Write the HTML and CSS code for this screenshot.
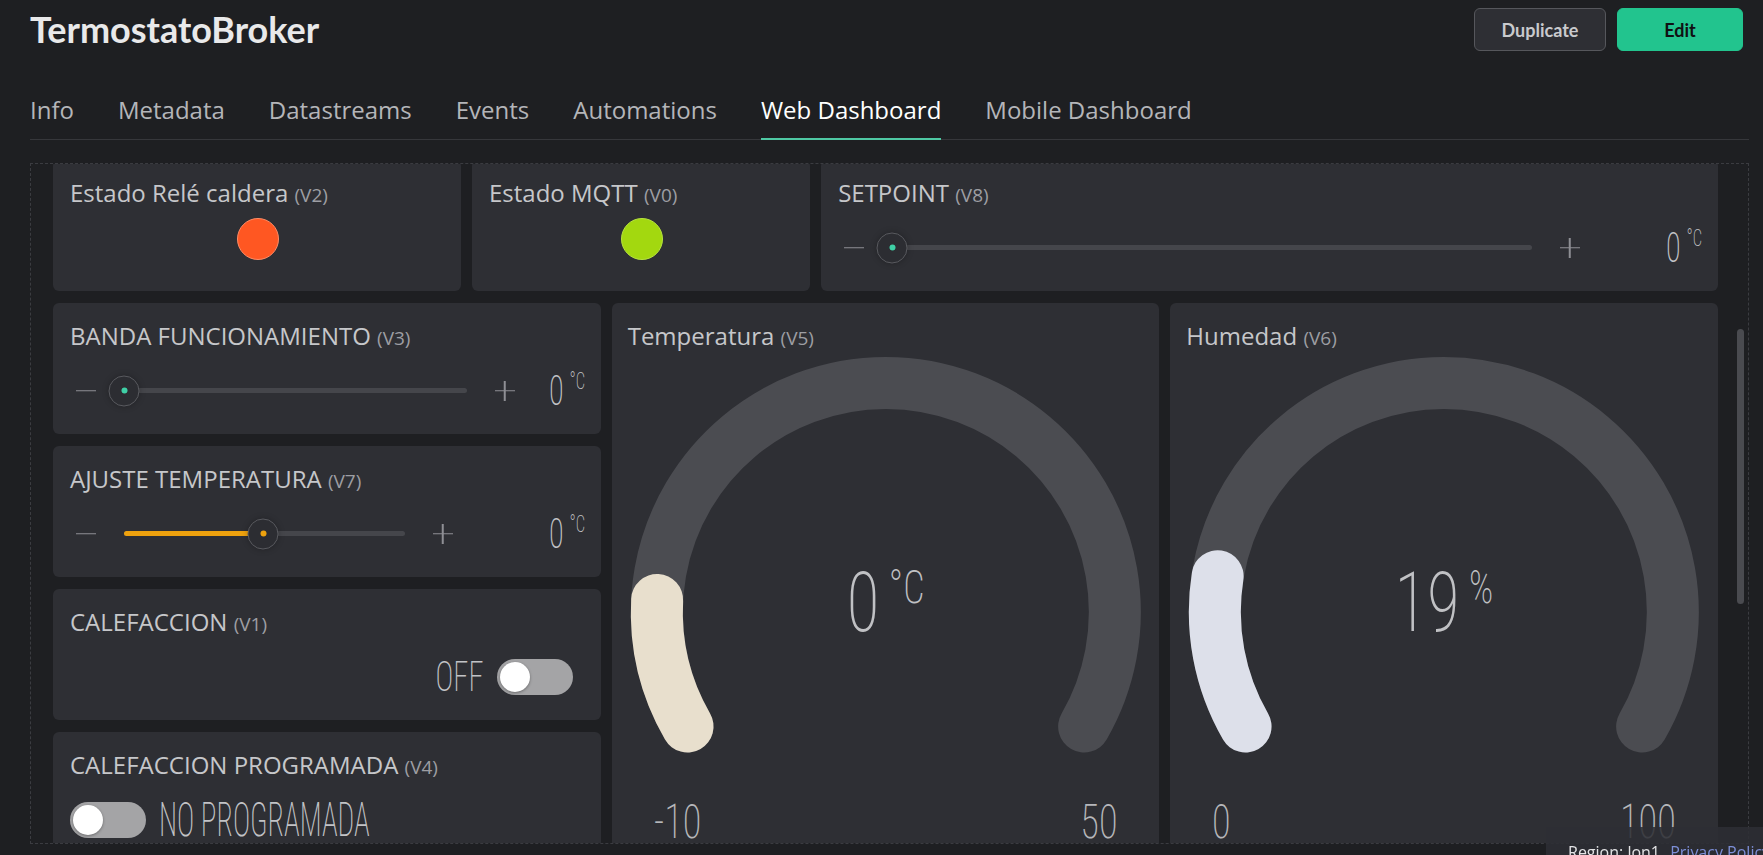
FILE: index.html
```html
<!DOCTYPE html>
<html lang="es">
<head>
<meta charset="utf-8">
<title>TermostatoBroker</title>
<link rel="stylesheet" href="styles.css">
</head>
<body>
<div class="app">
  <header class="top">
    <h1 class="title">TermostatoBroker</h1>
    <div class="actions">
      <button class="btn btn-dup">Duplicate</button>
      <button class="btn btn-edit">Edit</button>
    </div>
  </header>

  <nav class="tabs">
    <a class="tab">Info</a>
    <a class="tab">Metadata</a>
    <a class="tab">Datastreams</a>
    <a class="tab">Events</a>
    <a class="tab">Automations</a>
    <a class="tab active">Web Dashboard</a>
    <a class="tab">Mobile Dashboard</a>
  </nav>

  <section class="board">
    <div class="grid">
      <div class="card w-led1">
        <div class="wtitle">Estado Relé caldera <span class="pin">(V2)</span></div>
        <div class="led led-red"></div>
      </div>
      <div class="card w-led2">
        <div class="wtitle">Estado MQTT <span class="pin">(V0)</span></div>
        <div class="led led-green"></div>
      </div>
      <div class="card w-setpoint">
        <div class="wtitle">SETPOINT <span class="pin">(V8)</span></div>
        <div class="slider">
          <span class="step minus"></span>
          <div class="track"><span class="knob knob-teal" style="left:0%"></span></div>
          <span class="step plus"></span>
          <div class="sval sval-setpoint"><span class="cond"><span class="n">0</span><span class="u">°C</span></span></div>
        </div>
      </div>

      <div class="card w-banda">
        <div class="wtitle">BANDA FUNCIONAMIENTO <span class="pin">(V3)</span></div>
        <div class="slider">
          <span class="step minus"></span>
          <div class="track"><span class="knob knob-teal" style="left:0%"></span></div>
          <span class="step plus"></span>
          <div class="sval sval-banda"><span class="cond"><span class="n">0</span><span class="u">°C</span></span></div>
        </div>
      </div>

      <div class="card w-temp">
        <div class="wtitle">Temperatura <span class="pin">(V5)</span></div>
        <div class="gauge">
          <svg class="gsvg" viewBox="0 0 547 500" width="547" height="500">
            <path class="g-track" d="M 75.2 373.5 A 229 229 0 1 1 471.8 373.5"/>
            <path class="g-fill g-fill-temp" d="M 75.2 373.5 A 229 229 0 0 1 44.8 247"/>
          </svg>
          <div class="gval"><span class="cond"><span class="gn">0</span><span class="gu">°C</span></span></div>
          <div class="gscale">
            <span class="cond lab-l">-10</span>
            <span class="cond lab-r">50</span>
          </div>
        </div>
      </div>

      <div class="card w-hum">
        <div class="wtitle">Humedad <span class="pin">(V6)</span></div>
        <div class="gauge">
          <svg class="gsvg" viewBox="0 0 547 500" width="547" height="500">
            <path class="g-track" d="M 75.2 373.5 A 229 229 0 1 1 471.8 373.5"/>
            <path class="g-fill g-fill-hum" d="M 75.2 373.5 A 229 229 0 0 1 47.3 223.2"/>
          </svg>
          <div class="gval"><span class="cond"><span class="gn">19</span><span class="gu gu-pct">%</span></span></div>
          <div class="gscale">
            <span class="cond lab-l">0</span>
            <span class="cond lab-r">100</span>
          </div>
        </div>
      </div>

      <div class="card w-ajuste">
        <div class="wtitle">AJUSTE TEMPERATURA <span class="pin">(V7)</span></div>
        <div class="slider">
          <span class="step minus"></span>
          <div class="track"><span class="tfill" style="width:49.6%"></span><span class="knob knob-orange" style="left:49.6%"></span></div>
          <span class="step plus"></span>
          <div class="sval sval-ajuste"><span class="cond"><span class="n">0</span><span class="u">°C</span></span></div>
        </div>
      </div>

      <div class="card w-calef">
        <div class="wtitle">CALEFACCION <span class="pin">(V1)</span></div>
        <div class="swrow swrow-end">
          <span class="cond swlabel swlabel-r">OFF</span>
          <span class="switch"></span>
        </div>
      </div>

      <div class="card w-prog">
        <div class="wtitle">CALEFACCION PROGRAMADA <span class="pin">(V4)</span></div>
        <div class="swrow">
          <span class="switch"></span>
          <span class="cond swlabel swlabel-big">NO PROGRAMADA</span>
        </div>
      </div>
    </div>
    <div class="scroll-thumb"></div>
  </section>
</div>

<div class="region">Region: lon1 <a class="privacy">Privacy Policy</a></div>
</body>
</html>
```
FILE: styles.css
```css
* { box-sizing: border-box; }

html, body {
  margin: 0;
  height: 100%;
  background: #1e1f22;
  overflow: hidden;
}

body {
  font-family: "Open Sans", "Noto Sans", sans-serif;
  color: #c6c7ca;
}

.app {
  padding: 8px 14px 0 30px;
}

/* ---------- header ---------- */
.top {
  display: flex;
  justify-content: space-between;
  align-items: center;
  height: 43px;
  padding-right: 6px;
}

.title {
  margin: 0;
  font-family: "Lato", sans-serif;
  font-weight: 700;
  font-size: 36px;
  line-height: 43px;
  color: #e9e9ea;
}

.actions {
  display: flex;
  gap: 11px;
}

.btn {
  height: 43px;
  border-radius: 6px;
  font-family: "Lato", sans-serif;
  font-weight: 700;
  font-size: 18px;
  cursor: pointer;
}

.btn-dup {
  width: 132px;
  background: #2e2f34;
  border: 1px solid #56575c;
  color: #c9cacd;
}

.btn-edit {
  width: 126px;
  background: #22c48e;
  border: 1px solid #22c48e;
  color: #101113;
}

/* ---------- tabs ---------- */
.tabs {
  display: flex;
  gap: 44px;
  margin-top: 45px;
  border-bottom: 1px solid #36373b;
}

.tab {
  font-size: 24px;
  line-height: 28px;
  color: #b4b5b9;
  padding-bottom: 14px;
  border-bottom: 2px solid transparent;
  margin-bottom: -1px;
  white-space: nowrap;
}

.tab.active {
  color: #ffffff;
  border-bottom-color: #4fc9a4;
}

/* ---------- board ---------- */
.board {
  position: relative;
  margin-top: 23px;
  height: 681px;
  border: 1px dashed #3b3c41;
  padding: 0 30px 0 22px;
  overflow: hidden;
}

.grid {
  display: grid;
  grid-template-columns: repeat(24, 1fr);
  grid-auto-rows: 131px;
  column-gap: 11px;
  row-gap: 12px;
  margin-top: -4px;
}

.card {
  background: #2e2f34;
  border-radius: 6px;
  padding: 19px 16px 0 17px;
  overflow: hidden;
}

.w-led1 { grid-column: 1 / span 6; grid-row: 1; }
.w-led2 { grid-column: 7 / span 5; grid-row: 1; }
.w-setpoint { grid-column: 12 / span 13; grid-row: 1; }
.w-banda { grid-column: 1 / span 8; grid-row: 2; }
.w-ajuste { grid-column: 1 / span 8; grid-row: 3; }
.w-calef { grid-column: 1 / span 8; grid-row: 4; }
.w-prog { grid-column: 1 / span 8; grid-row: 5; }
.w-temp { grid-column: 9 / span 8; grid-row: 2 / span 4; }
.w-hum { grid-column: 17 / span 8; grid-row: 2 / span 4; }

.wtitle {
  font-size: 24px;
  line-height: 28.8px;
  color: #c6c7ca;
  white-space: nowrap;
}

.pin {
  font-size: 19px;
  color: #9d9ea3;
}

/* ---------- LED ---------- */
.led {
  width: 42px;
  height: 42px;
  border-radius: 50%;
  margin: 8px auto 0;
}

.led-red {
  background: #ff5722;
  border: 1px solid #ff8c66;
}

.led-green {
  background: #a3d80f;
  border: 1px solid #b7e43f;
}

/* ---------- condensed numerals ---------- */
.cond {
  display: inline-block;
  font-family: "Roboto", sans-serif;
  font-stretch: 75%;
  font-weight: 200;
  color: #c2c3c6;
  white-space: nowrap;
  line-height: 1;
  transform: scaleX(0.72);
}

/* ---------- slider ---------- */
.slider {
  display: flex;
  align-items: center;
  gap: 22px;
  margin-top: 22px;
  height: 32px;
}

.step {
  position: relative;
  width: 32px;
  height: 32px;
  flex: none;
}

.step::before,
.plus::after {
  content: "";
  position: absolute;
  left: 50%;
  top: 50%;
  width: 20px;
  height: 1.5px;
  background: #8e8f94;
  transform: translate(-50%, -50%);
}

.plus::after {
  transform: translate(-50%, -50%) rotate(90deg);
}

.track {
  position: relative;
  flex: 1;
  height: 5px;
  border-radius: 3px;
  background: #45464b;
}

.tfill {
  display: block;
  height: 100%;
  border-radius: 3px;
  background: #eea20e;
}

.knob {
  position: absolute;
  top: 50%;
  width: 31px;
  height: 31px;
  border-radius: 50%;
  background: #2c2d32;
  border: 1px solid #595a5f;
  transform: translate(-50%, -50%);
  box-shadow: 0 0 6px rgba(0, 0, 0, 0.25);
}

.knob::after {
  content: "";
  position: absolute;
  left: 50%;
  top: 50%;
  width: 6px;
  height: 6px;
  border-radius: 50%;
  transform: translate(-50%, -50%);
}

.knob-teal::after { background: #3fd0a6; }
.knob-orange::after { background: #eea20e; }

.sval {
  flex: none;
  display: flex;
  justify-content: flex-end;
  height: 42px;
}

.sval-banda { width: 42px; }
.sval-ajuste { width: 104px; }
.sval-setpoint { width: 94px; }

.sval .cond {
  flex: none;
  transform-origin: right center;
}

.n {
  font-size: 42px;
}

.u {
  display: inline-block;
  vertical-align: top;
  font-size: 23px;
  margin-left: 8px;
}

/* ---------- switch ---------- */
.swrow {
  display: flex;
  align-items: center;
  gap: 13px;
  margin-top: 20px;
  height: 36px;
}

.swrow-end {
  justify-content: flex-end;
  padding-right: 12px;
}

.switch {
  position: relative;
  flex: none;
  width: 76px;
  height: 36px;
  border-radius: 18px;
  background: #a4a4a6;
}

.switch::after {
  content: "";
  position: absolute;
  left: 3px;
  top: 3px;
  width: 30px;
  height: 30px;
  border-radius: 50%;
  background: #ffffff;
  box-shadow: 0 1px 3px rgba(0, 0, 0, 0.35);
}

.swlabel {
  font-size: 42px;
}

.swlabel-r {
  transform-origin: right center;
}

.swlabel-big {
  font-size: 48px;
  transform: scaleX(0.61);
  transform-origin: left center;
}

/* ---------- gauges ---------- */
.w-temp, .w-hum {
  padding: 19px 0 0 0;
}

.w-temp .wtitle, .w-hum .wtitle {
  padding-left: 16px;
}

.gauge {
  position: relative;
  width: 100%;
  height: 500px;
}

.gsvg {
  display: block;
  width: 100%;
  height: 500px;
}

.g-track,
.g-fill {
  fill: none;
  stroke-width: 52;
  stroke-linecap: round;
}

.g-track { stroke: #4b4c51; }
.g-fill-temp { stroke: #e8dfcd; }
.g-fill-hum { stroke: #dde0ea; }

.gval {
  position: absolute;
  top: 208px;
  left: 0;
  right: 0;
  text-align: center;
}

.gval .cond {
  transform: scaleX(0.8);
  transform-origin: center;
  color: #c0c1c4;
}

.gn {
  font-size: 84px;
}

.gu {
  display: inline-block;
  vertical-align: top;
  font-size: 47px;
  margin-left: 12px;
  margin-top: 2px;
}

.gscale {
  position: absolute;
  top: 445px;
  left: 42px;
  right: 42px;
  display: flex;
  justify-content: space-between;
}

.gscale .cond {
  font-size: 48px;
  color: #b6b7ba;
  transform: scaleX(0.8);
}

.gscale .lab-l { transform-origin: left center; }
.gscale .lab-r { transform-origin: right center; }

/* ---------- scrollbar ---------- */
.scroll-thumb {
  position: absolute;
  right: 4px;
  top: 165px;
  width: 7px;
  height: 275px;
  border-radius: 4px;
  background: #4a4b50;
}

/* ---------- region footer ---------- */
.region {
  position: fixed;
  left: 1546px;
  right: 0;
  bottom: 0;
  height: 28px;
  padding: 15px 0 0 22px;
  background: rgba(46, 47, 52, 0.88);
  font-size: 16px;
  line-height: 20px;
  color: #e3e3e5;
  white-space: nowrap;
  overflow: hidden;
}

.privacy {
  color: #7d8fd8;
  margin-left: 6px;
}
```
